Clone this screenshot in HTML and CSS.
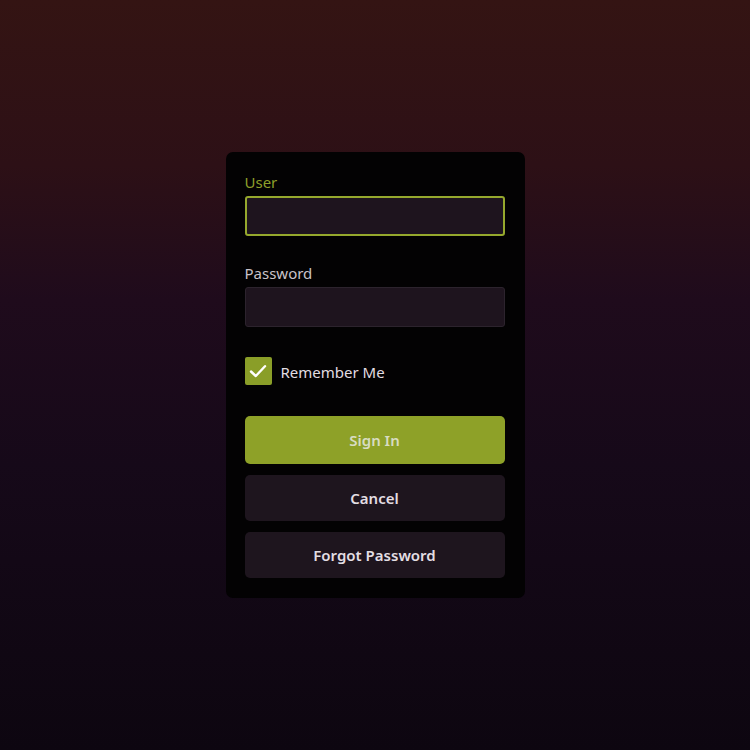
FILE: index.html
```html
<!DOCTYPE html>
<html lang="en">
<head>
<meta charset="utf-8">
<title>Sign In</title>
<link rel="stylesheet" href="styles.css">
</head>
<body>
<main class="page">
  <form class="card">
    <label class="field">
      <span class="label label-active">User</span>
      <input class="input input-active" type="text">
    </label>
    <label class="field field-second">
      <span class="label">Password</span>
      <input class="input" type="password">
    </label>
    <label class="remember">
      <span class="check">
        <svg width="18" height="14" viewBox="0 0 18 14"><path d="M2 7.5 L6.8 12 L16 2.2" fill="none" stroke="#ffffff" stroke-width="2.4" stroke-linecap="round" stroke-linejoin="round"/></svg>
      </span>
      <span class="remember-text">Remember Me</span>
    </label>
    <div class="actions">
      <button type="button" class="btn btn-primary">Sign In</button>
      <button type="button" class="btn btn-dark btn-short">Cancel</button>
      <button type="button" class="btn btn-dark btn-short">Forgot Password</button>
    </div>
  </form>
</main>
</body>
</html>
```
FILE: styles.css
```css
* { box-sizing: border-box; }
html, body { margin: 0; height: 100%; }
body {
  font-family: "Noto Sans", "Open Sans", sans-serif;
  background: linear-gradient(180deg, #341413 0%, #2d1016 22%, #1f0b1c 40%, #160919 62%, #0d0610 100%);
}
.page {
  height: 750px;
  display: flex;
  justify-content: center;
  padding-top: 152px;
}
.card {
  width: 299px;
  height: 446px;
  background: #030203;
  border-radius: 7px;
  padding: 20px 20px 20px 19px;
  display: flex;
  flex-direction: column;
}
.field { display: flex; flex-direction: column; }
.field-second { margin-top: 27px; }
.label {
  font-size: 15px;
  line-height: 20px;
  color: #c9c3c9;
  margin-bottom: 4px;
}
.label-active { color: #8d9f2a; }
.input {
  width: 260px;
  height: 40px;
  background: #1e141e;
  border: 1px solid #2c232d;
  border-radius: 3px;
  outline: none;
  margin: 0;
}
.input-active { border: 2px solid #95a82d; }
.remember {
  display: flex;
  align-items: center;
  margin-top: 30px;
  gap: 9px;
}
.check {
  width: 27px;
  height: 28px;
  background: #8a9e28;
  border-radius: 2px;
  display: flex;
  align-items: center;
  justify-content: center;
}
.remember-text {
  font-size: 15px;
  color: #e2dde2;
  padding-top: 2px;
}
.actions {
  margin-top: 31px;
  display: flex;
  flex-direction: column;
  gap: 11px;
}
.btn {
  width: 260px;
  height: 48px;
  border: none;
  border-radius: 5px;
  font-family: "Noto Sans", "Open Sans", sans-serif;
  font-weight: 600;
  font-size: 15px;
  padding: 0;
}
.btn-primary { background: #8ea128; color: #d8dcc2; }
.btn-dark { background: #1e151e; color: #e3dee3; }
.btn-short { height: 46px; }
```
